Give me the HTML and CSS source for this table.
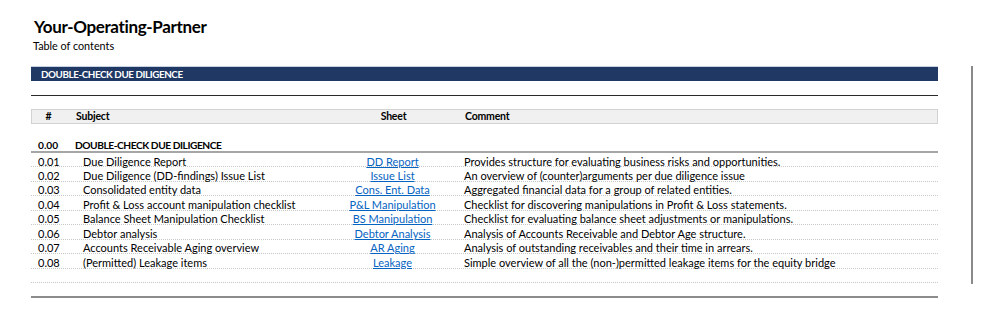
FILE: index.html
```html
<!DOCTYPE html>
<html>
<head>
<meta charset="utf-8">
<link rel="stylesheet" href="styles.css">
</head>
<body>
<div class="page">
  <main class="sheet">
    <header class="head">
      <h1 class="title">Your-Operating-Partner</h1>
      <div class="subtitle">Table of contents</div>
    </header>
    <div class="banner">DOUBLE-CHECK DUE DILIGENCE</div>
    <div class="rule"></div>
    <div class="row colhead">
      <div class="c-num">#</div>
      <div class="c-subj">Subject</div>
      <div class="c-sheet">Sheet</div>
      <div class="c-comm">Comment</div>
    </div>
    <div class="row section">
      <div class="c-num">0.00</div>
      <div class="c-subj">DOUBLE-CHECK DUE DILIGENCE</div>
      <div class="c-sheet"></div>
      <div class="c-comm"></div>
    </div>
    <div class="row item">
      <div class="c-num">0.01</div>
      <div class="c-subj">Due Diligence Report</div>
      <div class="c-sheet"><a href="#">DD Report</a></div>
      <div class="c-comm">Provides structure for evaluating business risks and opportunities.</div>
    </div>
    <div class="row item">
      <div class="c-num">0.02</div>
      <div class="c-subj">Due Diligence (DD-findings) Issue List</div>
      <div class="c-sheet"><a href="#">Issue List</a></div>
      <div class="c-comm">An overview of (counter)arguments per due diligence issue</div>
    </div>
    <div class="row item">
      <div class="c-num">0.03</div>
      <div class="c-subj">Consolidated entity data</div>
      <div class="c-sheet"><a href="#">Cons. Ent. Data</a></div>
      <div class="c-comm">Aggregated financial data for a group of related entities.</div>
    </div>
    <div class="row item">
      <div class="c-num">0.04</div>
      <div class="c-subj">Profit &amp; Loss account manipulation checklist</div>
      <div class="c-sheet"><a href="#">P&amp;L Manipulation</a></div>
      <div class="c-comm">Checklist for discovering manipulations in Profit &amp; Loss statements.</div>
    </div>
    <div class="row item">
      <div class="c-num">0.05</div>
      <div class="c-subj">Balance Sheet Manipulation Checklist</div>
      <div class="c-sheet"><a href="#">BS Manipulation</a></div>
      <div class="c-comm">Checklist for evaluating balance sheet adjustments or manipulations.</div>
    </div>
    <div class="row item">
      <div class="c-num">0.06</div>
      <div class="c-subj">Debtor analysis</div>
      <div class="c-sheet"><a href="#">Debtor Analysis</a></div>
      <div class="c-comm">Analysis of Accounts Receivable and Debtor Age structure.</div>
    </div>
    <div class="row item">
      <div class="c-num">0.07</div>
      <div class="c-subj">Accounts Receivable Aging overview</div>
      <div class="c-sheet"><a href="#">AR Aging</a></div>
      <div class="c-comm">Analysis of outstanding receivables and their time in arrears.</div>
    </div>
    <div class="row item">
      <div class="c-num">0.08</div>
      <div class="c-subj">(Permitted) Leakage items</div>
      <div class="c-sheet"><a href="#">Leakage</a></div>
      <div class="c-comm">Simple overview of all the (non-)permitted leakage items for the equity bridge</div>
    </div>
    <div class="row item empty"></div>
    <div class="row item empty last"></div>
  </main>
  <div class="pagebreak"></div>
</div>
</body>
</html>
```

FILE: styles.css
```css
html, body {
  margin: 0;
  padding: 0;
  background: #ffffff;
}
body {
  font-family: Lato, "Open Sans", "Liberation Sans", sans-serif;
  color: #000;
}
.page {
  display: flex;
  align-items: flex-start;
  padding-left: 31px;
}
.sheet {
  width: 907px;
  display: flex;
  flex-direction: column;
}
.head {
  padding: 17px 0 0 3px;
  height: 52px;
  box-sizing: border-box;
}
.title {
  margin: 0;
  font-size: 17px;
  line-height: 20px;
  font-weight: 700;
  letter-spacing: -0.35px;
}
.subtitle {
  font-size: 10.8px;
  line-height: 13px;
  margin-top: 2px;
  margin-left: -1px;
}
.banner {
  margin-top: 14px;
  height: 15px;
  box-sizing: border-box;
  background: #203864;
  border-top: 1px solid #c9d2e2;
  color: #fff;
  font-size: 9.8px;
  font-weight: 700;
  letter-spacing: -0.4px;
  line-height: 14px;
  padding-left: 10px;
}
.rule {
  margin-top: 14px;
  height: 1px;
  background: #2a2a2a;
}
.row {
  display: grid;
  grid-template-columns: 34px 280px 95px 1fr;
  box-sizing: border-box;
  font-size: 11px;
}
.row > div {
  white-space: nowrap;
}
.c-num {
  text-align: center;
}
.c-subj {
  padding-left: 10px;
}
.c-sheet {
  text-align: center;
}
.c-comm {
  padding-left: 24px;
}
.colhead {
  margin-top: 13px;
  height: 15px;
  background: #f0f0f0;
  border: 1px solid #d2d2d2;
  font-weight: 700;
  font-size: 10.5px;
  letter-spacing: -0.2px;
  line-height: 13px;
}
.colhead .c-num { padding-right: 1px; }
.section {
  height: 29px;
  border-bottom: 2px solid #a6a6a6;
  font-weight: 700;
  font-size: 10.2px;
  letter-spacing: -0.45px;
  line-height: 14px;
  padding-top: 14px;
}
.section .c-num { text-align: left; padding-left: 7px; letter-spacing: 0; }
.item {
  height: 14.45px;
  line-height: 13px;
  padding-top: 1.5px;
  border-bottom: 1px dotted #c8c8c8;
}
.item .c-num {
  text-align: left;
  padding-left: 7px;
}
.item .c-subj {
  padding-left: 18px;
}
.item a {
  color: #0563c1;
  text-decoration: underline;
}
.item.last {
  border-bottom: 2px solid #8c8c8c;
  height: 15.4px;
}
.pagebreak {
  width: 2px;
  height: 218px;
  margin-top: 66px;
  margin-left: 33px;
  background: #8a8a8a;
}
```
